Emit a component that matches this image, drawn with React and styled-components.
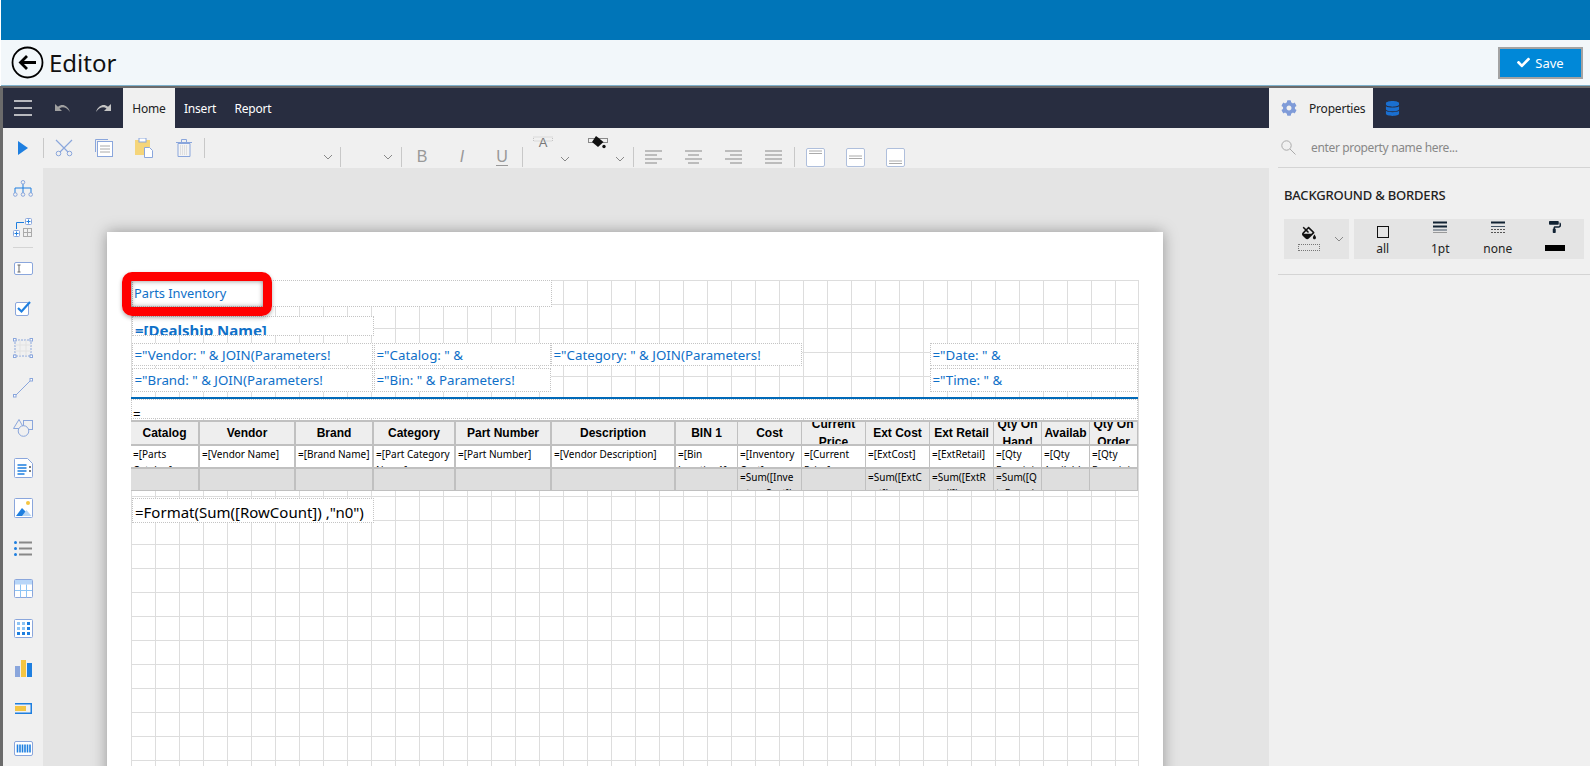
import React from "react";
import styled, { createGlobalStyle } from "styled-components";
import { FaCheck, FaCog, FaDatabase, FaFillDrip, FaPaintRoller } from "react-icons/fa";

const BLUE = "#1e7fe0";
const PERI = "#8aa6dc";
const UI_FONT = '"Noto Sans", "Open Sans", sans-serif';

const GlobalStyle = createGlobalStyle`
  html, body {
    margin: 0;
    padding: 0;
    height: 100%;
    overflow: hidden;
    background: #fff;
    font-family: ${UI_FONT};
  }
`;

const Shell = styled.div`
  width: 1590px;
  height: 766px;
  display: flex;
  flex-direction: column;
  overflow: hidden;
  padding-left: 1px;
  box-sizing: border-box;
`;

const TopBar = styled.div`
  height: 40px;
  flex: none;
  background: #0075b8;
`;

const HeaderBar = styled.div`
  height: 45px;
  flex: none;
  display: flex;
  align-items: center;
  padding: 0 7px 0 10px;
  background: #f2f7fa;
  border-bottom: 1px solid #7fb2cc;
`;

const BackButton = styled.button`
  width: 33px;
  height: 33px;
  padding: 0;
  border: none;
  background: none;
  display: flex;
`;

const Title = styled.h1`
  margin: 0 0 0 5px;
  flex: 1;
  font-size: 24px;
  font-weight: 400;
  color: #111;
`;

const SaveButton = styled.button`
  width: 85px;
  height: 32px;
  display: flex;
  align-items: center;
  justify-content: center;
  gap: 5px;
  background: #0088d8;
  color: #fff;
  border: 2px solid #a3a3a3;
  font-family: ${UI_FONT};
  font-size: 13px;
`;

const Workspace = styled.div`
  flex: 1;
  min-height: 0;
  display: flex;
  margin-left: -1px;
  border-top: 2px solid #6b6b6b;
  border-left: 3px solid #6b6b6b;
  background: #f0f0f0;
`;

const Designer = styled.div`
  flex: 1;
  min-width: 0;
  display: flex;
  flex-direction: column;
`;

const MenuBar = styled.div`
  height: 40px;
  flex: none;
  display: flex;
  align-items: stretch;
  background: #282d40;
`;

const MenuIcon = styled.div`
  width: 40px;
  display: flex;
  align-items: center;
  justify-content: center;
`;

const MenuTab = styled.div`
  width: ${(p) => p.$w}px;
  display: flex;
  align-items: center;
  justify-content: center;
  font-size: 12px;
  letter-spacing: -0.2px;
  color: ${(p) => (p.$active ? "#222" : "#fff")};
  background: ${(p) => (p.$active ? "#f0f0f0" : "transparent")};
`;

const Toolbar = styled.div`
  height: 40px;
  flex: none;
  display: flex;
  align-items: center;
  background: #f0f0f0;
`;

const ToolSlot = styled.div`
  width: 40px;
  height: 24px;
  flex: none;
  display: flex;
  align-items: center;
  justify-content: center;
  margin-top: ${(p) => (p.$low ? "18px" : "0")};
`;

const ToolSep = styled.div`
  width: 1px;
  height: 20px;
  flex: none;
  background: #c8c8c8;
  margin-top: ${(p) => (p.$low ? "18px" : "0")};
`;

const DropSlot = styled.div`
  width: ${(p) => p.$w}px;
  height: 20px;
  flex: none;
  margin-top: 18px;
  display: flex;
  align-items: center;
  justify-content: flex-end;
  padding-right: ${(p) => p.$pad}px;
  box-sizing: border-box;
`;

const ColorSlot = styled.div`
  width: 55px;
  height: 40px;
  flex: none;
  box-sizing: border-box;
  padding: 8px 8px 6px 10px;
  display: flex;
  justify-content: space-between;
`;

const ColorChevron = styled.span`
  align-self: flex-end;
  display: flex;
`;

const GroupChevron = styled.span`
  align-self: center;
  display: flex;
`;

const Body = styled.div`
  flex: 1;
  min-height: 0;
  display: flex;
`;

const SideBar = styled.div`
  width: 40px;
  flex: none;
  overflow: hidden;
  background: #f0f0f0;
`;

const SideSep = styled.div`
  height: 1px;
  margin: -1px 10px 0;
  background: #d4d4d4;
`;

const SideSlot = styled.div`
  height: 40px;
  display: flex;
  align-items: center;
  justify-content: center;
`;

const Canvas = styled.div`
  flex: 1;
  min-width: 0;
  overflow: hidden;
  background: #e4e4e4;
  padding: 64px 0 0 64px;
`;

const Sheet = styled.div`
  width: 1056px;
  height: 700px;
  box-sizing: border-box;
  padding: 48px 0 0 24px;
  background: #fff;
  box-shadow: 0 0 14px rgba(0, 0, 0, 0.35);
`;

const Surface = styled.div`
  position: relative;
  width: 1008px;
  height: 640px;
  background-color: #fff;
  background-image: linear-gradient(to right, #ddd 1px, transparent 1px),
    linear-gradient(to bottom, #ddd 1px, transparent 1px);
  background-size: 24px 24px;
  border-right: 1px solid #ddd;
  box-sizing: border-box;
`;

const TextBox = styled.div`
  position: absolute;
  left: ${(p) => p.$x}px;
  top: ${(p) => p.$y}px;
  width: ${(p) => p.$w}px;
  height: ${(p) => p.$h}px;
  box-sizing: border-box;
  padding: ${(p) => p.$pad || "0 1.5px"};
  overflow: hidden;
  white-space: nowrap;
  display: flex;
  align-items: ${(p) => p.$align || "center"};
  background: #fff;
  border: 1px dotted #c4c4c4;
  color: ${(p) => p.$color || "#0f70c8"};
  font-size: ${(p) => p.$size || 13.3}px;
  font-weight: ${(p) => p.$weight || 400};
`;

const Rule = styled.div`
  position: absolute;
  left: 0;
  top: 117px;
  width: 1007px;
  height: 2px;
  background: #0069b8;
`;

const Highlight = styled.div`
  position: absolute;
  left: -9px;
  top: -8px;
  width: 150px;
  height: 44px;
  box-sizing: border-box;
  border: 9px solid #f00;
  border-radius: 10px;
  box-shadow: 0 2px 4px rgba(0, 0, 0, 0.3), inset 0 0 5px rgba(0, 0, 0, 0.45);
`;

const ReportTable = styled.div`
  position: absolute;
  left: 0;
  top: 140px;
  width: 1007px;
  display: grid;
  grid-template-columns: 69px 96px 78px 82px 96px 124px 62px 64px 64px 64px 64px 48px 48px 48px;
  border-top: 2px solid #c0c0c0;
  border-bottom: 1px solid #c0c0c0;
`;

const Cell = styled.div`
  height: ${(p) => (p.$kind === "head" ? 22 : 23)}px;
  box-sizing: border-box;
  overflow: hidden;
  display: flex;
  align-items: ${(p) => (p.$kind === "head" ? "center" : "flex-start")};
  justify-content: ${(p) => (p.$kind === "head" ? "center" : "flex-start")};
  text-align: ${(p) => (p.$kind === "head" ? "center" : "left")};
  padding: 0 2px;
  border-right: ${(p) => (p.$thick ? 2 : 1)}px solid #c0c0c0;
  border-top: ${(p) => (p.$kind === "head" ? "0" : "2px solid #c0c0c0")};
  overflow-wrap: anywhere;
  color: #000;
  background: ${(p) =>
    p.$kind === "head" ? "#eee" : p.$kind === "foot" ? "#dedede" : "#fff"};
  font-family: ${(p) => (p.$kind === "head" ? '"Liberation Sans", Arial, sans-serif' : UI_FONT)};
  font-size: ${(p) => (p.$kind === "head" ? 12 : 10)}px;
  font-weight: ${(p) => (p.$kind === "head" ? 700 : 400)};
  line-height: ${(p) => (p.$kind === "head" ? "18px" : "16px")};
`;

const Panel = styled.div`
  width: 321px;
  flex: none;
  display: flex;
  flex-direction: column;
  background: #f0f0f0;
`;

const PanelTabs = styled.div`
  height: 40px;
  flex: none;
  display: flex;
  background: #282d40;
`;

const PropertiesTab = styled.div`
  width: 104px;
  display: flex;
  align-items: center;
  gap: 12px;
  padding-left: 12px;
  box-sizing: border-box;
  background: #f0f0f0;
  color: #222;
  font-size: 12px;
  letter-spacing: -0.2px;
`;

const DataTab = styled.div`
  width: 38px;
  display: flex;
  align-items: center;
  justify-content: center;
`;

const SearchRow = styled.div`
  height: 40px;
  flex: none;
  margin-left: 9px;
  display: flex;
  align-items: center;
  gap: 15px;
  padding-left: 3px;
  border-bottom: 1px solid #d4d4d4;
  box-sizing: border-box;
`;

const SearchInput = styled.input`
  flex: 1;
  padding: 0;
  border: none;
  outline: none;
  background: none;
  font-family: ${UI_FONT};
  font-size: 12px;
  letter-spacing: -0.35px;
  &::placeholder {
    color: #888;
    opacity: 1;
  }
`;

const Section = styled.div`
  margin-left: 9px;
  padding: 18px 6px 15px;
  border-bottom: 1px solid #d4d4d4;
`;

const SectionTitle = styled.div`
  font-size: 13px;
  font-weight: 500;
  letter-spacing: -0.2px;
  color: #222;
  line-height: 18px;
  margin-bottom: 15px;
`;

const ToolGroups = styled.div`
  display: flex;
  gap: 5px;
  height: 40px;
`;

const Group = styled.div`
  width: ${(p) => p.$w}px;
  display: flex;
  align-items: stretch;
  background: #e4e4e4;
`;

const BorderTool = styled.div`
  width: ${(p) => p.$w || 58}px;
  display: flex;
  flex-direction: column;
  align-items: center;
  font-size: 12px;
  color: #222;
  padding-top: ${(p) => p.$top || 2}px;
  box-sizing: border-box;
`;

const ToolLabel = styled.span`
  margin-top: auto;
  line-height: 17px;
  padding-bottom: 2px;
`;

const DottedSwatch = styled.span`
  width: 20px;
  height: 5px;
  margin-top: 4px;
  border: 1px dotted #777;
`;

const BlackSwatch = styled.span`
  width: 20px;
  height: 6px;
  margin-top: auto;
  margin-bottom: 8px;
  background: #000;
`;

const Ico = ({ w = 20, h = 20, children }) => (
  <svg width={w} height={h} viewBox={`0 0 ${w} ${h}`} fill="none">
    {children}
  </svg>
);

const Chevron = () => (
  <Ico w={10} h={6}>
    <path d="M1 1l4 4 4-4" stroke="#888" />
  </Ico>
);

const BackIcon = () => (
  <Ico w={33} h={33}>
    <circle cx="16.5" cy="16.5" r="15" stroke="#000" strokeWidth="1.8" />
    <path d="M25 16.5H10M16 10l-6.5 6.5L16 23" stroke="#000" strokeWidth="2.8" />
  </Ico>
);

const Hamburger = () => (
  <Ico w={18} h={16}>
    <path d="M0 1h18M0 8h18M0 15h18" stroke="#e8e8e8" strokeWidth="1.4" />
  </Ico>
);

const FlipSvg = styled.svg`
  transform: ${(p) => (p.$flip ? "scaleX(-1)" : "none")};
`;

const Undo = ({ flip }) => (
  <FlipSvg $flip={flip} width="16" height="10" viewBox="0 0 16 10">
    <path d="M0 1v7h7L4.5 5.5C7 3.5 11 3.5 15 9 12.5 2 7 .5 3 3.7z" fill={flip ? "#c4c4c4" : "#a0a0a0"} />
  </FlipSvg>
);

const PlayIcon = () => (
  <Ico w={10} h={14}>
    <path d="M0 0l10 7-10 7z" fill={BLUE} />
  </Ico>
);

const CutIcon = () => (
  <Ico w={18} h={18}>
    <path d="M1 1l12 12M17 1L5 13" stroke={PERI} strokeWidth="1.2" />
    <circle cx="3.5" cy="14.5" r="2.3" stroke={PERI} />
    <circle cx="14.5" cy="14.5" r="2.3" stroke={PERI} />
  </Ico>
);

const CopyIcon = () => (
  <Ico w={18} h={18}>
    <path d="M.5 13V.5H13" stroke={PERI} />
    <rect x="2.5" y="2.5" width="15" height="15" fill="#fff" stroke={PERI} />
    <path d="M5 7h10M5 10h10M5 13h10" stroke="#aaa" />
  </Ico>
);

const PasteIcon = () => (
  <Ico w={18} h={20}>
    <rect x="0" y="2" width="15" height="15" fill="#f5d57a" />
    <rect x="4" y="0" width="7" height="4" fill="#fff" stroke={PERI} />
    <path d="M9.5 9.5h5l3 3v7h-8z" fill="#fff" stroke={PERI} />
  </Ico>
);

const TrashIcon = () => (
  <Ico w={16} h={18}>
    <path d="M0 3.5h16M5.5 3V.5h5V3" stroke={PERI} />
    <path d="M2 4.5h12v13H2z" fill="#f4f4f4" stroke={PERI} />
    <path d="M4 7h8M4 9h8M4 11h8M4 13h8M4 15h8" stroke="#ccc" strokeDasharray="1 1" />
  </Ico>
);

const StyleGlyph = styled.span`
  color: #999;
  font-size: 16px;
  line-height: 1;
  font-family: "Liberation Sans", Arial, sans-serif;
  font-style: ${(p) => (p.$italic ? "italic" : "normal")};
  border-bottom: ${(p) => (p.$underline ? "1px solid #999" : "none")};
`;

const FontColorIcon = () => (
  <svg width="20" height="12" viewBox="0 0 20 12">
    <path d="M.5 1h19v4H.5z" fill="none" stroke="#c4c4c4" strokeDasharray="1 1" />
    <text x="10" y="11" fontSize="13" fill="#777" textAnchor="middle" fontFamily="Liberation Sans">A</text>
  </svg>
);

const FillColorIcon = () => (
  <Ico w={20} h={13}>
    <path d="M.5 2.5h19v4H.5z" stroke="#222" strokeDasharray="1 1" />
    <path d="M8 0l2 1.5 5.5 4.5L10 11 4 6z" fill="#111" />
    <circle cx="16" cy="10.5" r="1.7" fill="#111" />
  </Ico>
);

const AlignIcon = ({ lines }) => (
  <Ico w={18} h={14}>
    {lines.map(([a, b], i) => (
      <path key={i} d={`M${a} ${1 + i * 4}H${b}`} stroke="#999" strokeWidth="1.2" />
    ))}
  </Ico>
);

const VAlignIcon = ({ at }) => (
  <Ico w={19} h={19}>
    <rect x=".5" y=".5" width="18" height="18" rx="1.5" fill="#fff" stroke="#afbfdc" />
    <path d={`M3 ${at}h13M3 ${at + 2.5}h13`} stroke="#aaa" />
  </Ico>
);

const TreeIcon = () => (
  <Ico w={20} h={17}>
    <path d="M10 4v9M2 13V8h16v5" stroke={BLUE} />
    <circle cx="10" cy="2.3" r="1.8" stroke={PERI} />
    <g fill="#f0f0f0" stroke={PERI}>
      <circle cx="2.3" cy="14.5" r="1.8" />
      <circle cx="10" cy="14.5" r="1.8" />
      <circle cx="17.7" cy="14.5" r="1.8" />
    </g>
  </Ico>
);

const PlusBox = ({ x, y }) => (
  <g>
    <rect x={x + 0.5} y={y + 0.5} width="6" height="6" rx="1" stroke={PERI} fill="#fff" />
    <path d={`M${x + 1.5} ${y + 3.5}h4M${x + 3.5} ${y + 1.5}v4`} stroke={BLUE} />
  </g>
);

const AddIcon = () => (
  <Ico w={20} h={20}>
    <path d="M3.5 11V4.5H11" stroke={BLUE} />
    <PlusBox x={12} y={0} />
    <PlusBox x={0} y={12} />
    <rect x="10.5" y="10.5" width="8" height="8" stroke="#aaa" />
    <path d="M14.5 10.5v8M10.5 14.5h8" stroke="#aaa" />
  </Ico>
);

const TextboxIcon = () => (
  <Ico w={19} h={13}>
    <rect x=".5" y=".5" width="18" height="12" rx="1.5" fill="#fff" stroke={PERI} />
    <path d="M3.5 3h3M3.5 10h3M5 3v7" stroke="#666" />
  </Ico>
);

const CheckIcon = () => (
  <Ico w={17} h={16}>
    <rect x=".5" y="2.5" width="13" height="13" rx="1.5" fill="#fff" stroke={PERI} />
    <path d="M3 8l3.5 3.5L15 2" stroke={BLUE} strokeWidth="2.2" />
  </Ico>
);

const ContainerIcon = () => (
  <Ico w={20} h={20}>
    <rect x="2" y="2" width="16" height="16" stroke={PERI} strokeDasharray="2 1" />
    <path d="M7 2v16M13 2v16M2 7h16M2 13h16" stroke="#e2e2e2" />
    <g fill="#fff" stroke={PERI}>
      <rect x=".5" y=".5" width="2.5" height="2.5" />
      <rect x="17" y=".5" width="2.5" height="2.5" />
      <rect x=".5" y="17" width="2.5" height="2.5" />
      <rect x="17" y="17" width="2.5" height="2.5" />
    </g>
  </Ico>
);

const LineIcon = () => (
  <Ico w={20} h={20}>
    <path d="M2 18L18 2" stroke={PERI} />
    <rect x=".5" y="16.5" width="2.5" height="2.5" fill="#fff" stroke={PERI} />
    <rect x="17" y=".5" width="2.5" height="2.5" fill="#fff" stroke={PERI} />
  </Ico>
);

const ShapesIcon = () => (
  <Ico w={20} h={18}>
    <path d="M.5 9.5L6 .5l5 9z" stroke={PERI} />
    <rect x="10.5" y="1.5" width="9" height="9" fill="#f0f0f0" stroke={PERI} />
    <circle cx="10.5" cy="12" r="5.3" fill="#f0f0f0" stroke={PERI} />
  </Ico>
);

const RichTextIcon = () => (
  <Ico w={19} h={20}>
    <path d="M.5 1.5a1 1 0 011-1h12l5 5v13a1 1 0 01-1 1h-16a1 1 0 01-1-1z" fill="#fff" stroke={PERI} />
    <path d="M3.5 7h9M3.5 10h9M3.5 13h9M3.5 16h7" stroke={BLUE} strokeWidth="1.5" />
    <path d="M15 9h2M15 13h2" stroke="#555" strokeWidth="1.5" />
  </Ico>
);

const ImageIcon = () => (
  <Ico w={19} h={20}>
    <rect x=".5" y=".5" width="18" height="19" rx="1" fill="#fff" stroke={PERI} />
    <circle cx="14" cy="5" r="2" fill="#f5c542" />
    <path d="M2 18l6-8 8 8z" fill={BLUE} />
    <path d="M8 18l4.5-6 5 6z" fill="#b5d5f5" />
  </Ico>
);

const ListIcon = () => (
  <Ico w={18} h={15}>
    <g fill={BLUE}>
      <circle cx="1.5" cy="1.5" r="1.5" />
      <circle cx="1.5" cy="7.5" r="1.5" />
      <circle cx="1.5" cy="13.5" r="1.5" />
    </g>
    <path d="M5 1.5h13M5 7.5h13M5 13.5h13" stroke="#888" strokeWidth="1.8" />
  </Ico>
);

const TableIcon = () => (
  <Ico w={19} h={19}>
    <rect x=".5" y=".5" width="18" height="18" rx="1" fill="#fff" stroke={PERI} />
    <rect x="1" y="1" width="17" height="4.5" fill="#b8d6f8" />
    <path d="M1 11.5h17M6.5 5.5v13M12.5 5.5v13" stroke="#8cc4f5" />
  </Ico>
);

const MatrixIcon = () => (
  <Ico w={19} h={19}>
    <rect x=".5" y=".5" width="18" height="18" rx="1" fill="#fff" stroke={PERI} />
    {[0, 1, 2].map((r) =>
      [0, 1, 2].map((c) => (
        <rect
          key={`${r}-${c}`}
          x={3 + c * 5}
          y={3 + r * 5}
          width="3"
          height="3"
          fill={r === 2 || c === 2 ? BLUE : "#8cc4f5"}
        />
      ))
    )}
  </Ico>
);

const ChartIcon = () => (
  <Ico w={17} h={17}>
    <rect x="0" y="6" width="5" height="11" fill={PERI} />
    <rect x="6" y="0" width="5" height="17" fill="#f5c542" />
    <rect x="12" y="3" width="5" height="14" fill={BLUE} />
  </Ico>
);

const BulletIcon = () => (
  <Ico w={17} h={11}>
    <path d="M0 .75h16.25v9.5H0" stroke={BLUE} strokeWidth="1.5" />
    <rect x="0" y="3" width="11" height="5" fill="#f5c542" />
  </Ico>
);

const BarcodeIcon = () => (
  <Ico w={19} h={15}>
    <rect x=".5" y=".5" width="18" height="14" rx="1.5" fill="#fff" stroke={PERI} />
    <path d="M3.5 3.5v8M6 3.5v8M8.5 3.5v8M11 3.5v8M13.5 3.5v8M16 3.5v8" stroke={BLUE} strokeWidth="1.6" />
  </Ico>
);

const SearchIcon = () => (
  <Ico w={15} h={15}>
    <circle cx="5.5" cy="5.5" r="4.7" stroke="#aaa" />
    <path d="M9 9l5.5 5.5" stroke="#aaa" />
  </Ico>
);

const ThickLines = () => (
  <Ico w={14} h={12}>
    <path d="M0 1.5h14M0 5.5h14" stroke="#123" strokeWidth="2" />
    <path d="M0 9h14" stroke="#456" />
    <path d="M0 11.5h14" stroke="#999" />
  </Ico>
);

const DashLines = () => (
  <Ico w={14} h={12}>
    <path d="M0 1.5h14" stroke="#123" strokeWidth="2" />
    <path d="M0 5.5h14" stroke="#456" />
    <path d="M0 8.5h14M0 11.5h14" stroke="#555" strokeDasharray="2 1" />
  </Ico>
);

const sideTop = [<TreeIcon key="t" />, <AddIcon key="a" />];
const sideTools = [
  <TextboxIcon key="1" />,
  <CheckIcon key="2" />,
  <ContainerIcon key="3" />,
  <LineIcon key="4" />,
  <ShapesIcon key="5" />,
  <RichTextIcon key="6" />,
  <ImageIcon key="7" />,
  <ListIcon key="8" />,
  <TableIcon key="9" />,
  <MatrixIcon key="10" />,
  <ChartIcon key="11" />,
  <BulletIcon key="12" />,
  <BarcodeIcon key="13" />,
];

const headers = [
  "Catalog", "Vendor", "Brand", "Category", "Part Number", "Description", "BIN 1",
  "Cost", "Current Price", "Ext Cost", "Ext Retail", "Qty On Hand", "Qty Available", "Qty On Order",
];
const details = [
  "=[Parts Catalog]", "=[Vendor Name]", "=[Brand Name]", "=[Part Category Name]", "=[Part Number]",
  "=[Vendor Description]", "=[Bin Location1]", "=[Inventory Cost]", "=[Current Price]", "=[ExtCost]",
  "=[ExtRetail]", "=[Qty Remaining]", "=[Qty Available]", "=[Qty Remaining]",
];
const totals = [
  "", "", "", "", "", "", "", "=Sum([InventoryCost])", "", "=Sum([ExtCost])", "=Sum([ExtRetail])",
  "=Sum([QtyRemaining])", "", "",
];

const boxes = [
  { x: 1, y: 0, w: 420, h: 27, text: "Parts Inventory", size: 12.8, pad: "0 0 2px 1px" },
  { x: 1, y: 36, w: 242, h: 20, text: "=[Dealship Name]", size: 15, weight: 700, align: "flex-start", pad: "3px 2px 0" },
  { x: 1, y: 63, w: 241, h: 23, text: '="Vendor: " & JOIN(Parameters!' },
  { x: 243, y: 63, w: 177, h: 23, text: '="Catalog: " &' },
  { x: 420, y: 63, w: 251, h: 23, text: '="Category: " & JOIN(Parameters!' },
  { x: 799, y: 63, w: 208, h: 23, text: '="Date: " &' },
  { x: 1, y: 88, w: 241, h: 24, text: '="Brand: " & JOIN(Parameters!' },
  { x: 243, y: 88, w: 177, h: 24, text: '="Bin: " & Parameters!' },
  { x: 799, y: 88, w: 208, h: 24, text: '="Time: " &' },
  { x: 0, y: 119, w: 1007, h: 20, text: "=", color: "#000", pad: "9px 1px 0" },
  { x: 1, y: 218, w: 242, h: 25, text: '=Format(Sum([RowCount]) ,"n0")', color: "#000", size: 15, pad: "3px 2px 0" },
];

export default function App() {
  return (
    <>
      <GlobalStyle />
      <Shell>
        <TopBar />
        <HeaderBar>
          <BackButton><BackIcon /></BackButton>
          <Title>Editor</Title>
          <SaveButton><FaCheck size={13} />Save</SaveButton>
        </HeaderBar>
        <Workspace>
          <Designer>
            <MenuBar>
              <MenuIcon><Hamburger /></MenuIcon>
              <MenuIcon><Undo /></MenuIcon>
              <MenuIcon><Undo flip /></MenuIcon>
              <MenuTab $active $w={52}>Home</MenuTab>
              <MenuTab $w={50}>Insert</MenuTab>
              <MenuTab $w={56}>Report</MenuTab>
            </MenuBar>
            <Toolbar>
              <ToolSlot><PlayIcon /></ToolSlot>
              <ToolSep />
              <ToolSlot><CutIcon /></ToolSlot>
              <ToolSlot><CopyIcon /></ToolSlot>
              <ToolSlot><PasteIcon /></ToolSlot>
              <ToolSlot><TrashIcon /></ToolSlot>
              <ToolSep />
              <DropSlot $w={135} $pad={7}><Chevron /></DropSlot>
              <ToolSep $low />
              <DropSlot $w={60} $pad={8}><Chevron /></DropSlot>
              <ToolSep $low />
              <ToolSlot $low><StyleGlyph>B</StyleGlyph></ToolSlot>
              <ToolSlot $low><StyleGlyph $italic>I</StyleGlyph></ToolSlot>
              <ToolSlot $low><StyleGlyph $underline>U</StyleGlyph></ToolSlot>
              <ToolSep $low />
              <ColorSlot><FontColorIcon /><ColorChevron><Chevron /></ColorChevron></ColorSlot>
              <ColorSlot><FillColorIcon /><ColorChevron><Chevron /></ColorChevron></ColorSlot>
              <ToolSep $low />
              <ToolSlot $low><AlignIcon lines={[[0, 17], [0, 12], [0, 17], [0, 12]]} /></ToolSlot>
              <ToolSlot $low><AlignIcon lines={[[0, 17], [3, 14], [0, 17], [3, 14]]} /></ToolSlot>
              <ToolSlot $low><AlignIcon lines={[[0, 17], [5, 17], [0, 17], [5, 17]]} /></ToolSlot>
              <ToolSlot $low><AlignIcon lines={[[0, 17], [0, 17], [0, 17], [0, 17]]} /></ToolSlot>
              <ToolSep $low />
              <ToolSlot $low><VAlignIcon at={3} /></ToolSlot>
              <ToolSlot $low><VAlignIcon at={8} /></ToolSlot>
              <ToolSlot $low><VAlignIcon at={13} /></ToolSlot>
            </Toolbar>
            <Body>
              <SideBar>
                <SideSep />
                {sideTop.map((icon) => <SideSlot key={icon.key}>{icon}</SideSlot>)}
                <SideSep />
                {sideTools.map((icon) => <SideSlot key={icon.key}>{icon}</SideSlot>)}
              </SideBar>
              <Canvas>
                <Sheet>
                  <Surface>
                    {boxes.map((b) => (
                      <TextBox
                        key={b.text}
                        $x={b.x}
                        $y={b.y}
                        $w={b.w}
                        $h={b.h}
                        $size={b.size}
                        $weight={b.weight}
                        $color={b.color}
                        $align={b.align}
                        $pad={b.pad}
                      >
                        {b.text}
                      </TextBox>
                    ))}
                    <Rule />
                    <ReportTable>
                      {headers.map((text, i) => (
                        <Cell key={text} $kind="head" $thick={i < 6}><span>{text}</span></Cell>
                      ))}
                      {details.map((text, i) => (
                        <Cell key={i} $kind="body" $thick={i < 6}>{text}</Cell>
                      ))}
                      {totals.map((text, i) => (
                        <Cell key={i} $kind="foot" $thick={i < 6}>{text}</Cell>
                      ))}
                    </ReportTable>
                    <Highlight />
                  </Surface>
                </Sheet>
              </Canvas>
            </Body>
          </Designer>
          <Panel>
            <PanelTabs>
              <PropertiesTab><FaCog size={16} color="#7f9bd8" />Properties</PropertiesTab>
              <DataTab><FaDatabase size={15} color="#1a6fd0" /></DataTab>
            </PanelTabs>
            <SearchRow>
              <SearchIcon />
              <SearchInput placeholder="enter property name here..." />
            </SearchRow>
            <Section>
              <SectionTitle>BACKGROUND &amp; BORDERS</SectionTitle>
              <ToolGroups>
                <Group $w={65}>
                  <BorderTool $w={50} $top={7}>
                    <FaFillDrip size={14} color="#111" />
                    <DottedSwatch />
                  </BorderTool>
                  <GroupChevron><Chevron /></GroupChevron>
                </Group>
                <Group $w={230}>
                  <BorderTool $top={7}>
                    <Ico w={12} h={12}><rect x=".5" y=".5" width="11" height="11" stroke="#111" /></Ico>
                    <ToolLabel>all</ToolLabel>
                  </BorderTool>
                  <BorderTool><ThickLines /><ToolLabel>1pt</ToolLabel></BorderTool>
                  <BorderTool><DashLines /><ToolLabel>none</ToolLabel></BorderTool>
                  <BorderTool>
                    <FaPaintRoller size={12} color="#123" />
                    <BlackSwatch />
                  </BorderTool>
                </Group>
              </ToolGroups>
            </Section>
          </Panel>
        </Workspace>
      </Shell>
    </>
  );
}
